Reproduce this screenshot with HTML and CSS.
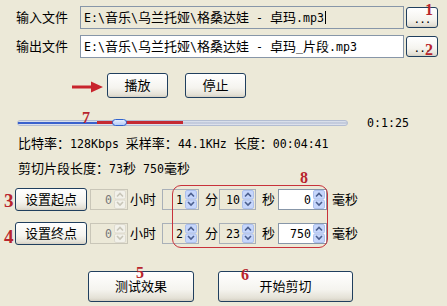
FILE: index.html
```html
<!DOCTYPE html>
<html lang="zh">
<head>
<meta charset="utf-8">
<title>MP3 剪切</title>
<link rel="stylesheet" href="styles.css">
</head>
<body>
<div class="app">
  <div class="file-row">
    <span class="file-label">输入文件</span>
    <div class="field ro"><span class="en">E:\</span>音乐<span class="en">\</span>乌兰托娅<span class="en">\</span>格桑达娃<span class="en"> - </span>卓玛<span class="en">.mp3</span><span class="caret"></span></div>
    <button class="btn browse">...</button>
  </div>
  <div class="file-row">
    <span class="file-label">输出文件</span>
    <div class="field"><span class="en">E:\</span>音乐<span class="en">\</span>乌兰托娅<span class="en">\</span>格桑达娃<span class="en"> - </span>卓玛<span class="en">_</span>片段<span class="en">.mp3</span></div>
    <button class="btn browse">...</button>
  </div>

  <div class="play-row">
    <svg class="arrow" width="32" height="12" viewBox="0 0 32 12"><path d="M0 4.5 H19 V0.5 L31 6 L19 11.5 V7.5 H0 Z" fill="#c8242c"/></svg>
    <button class="btn play">播放</button>
    <button class="btn play stop">停止</button>
  </div>

  <div class="slider-row">
    <div class="slider">
      <div class="track"></div>
      <div class="progress"></div>
      <div class="mark"></div>
      <div class="thumb"></div>
    </div>
    <span class="time en">0:1:25</span>
  </div>

  <div class="info">比特率：<span class="en">128Kbps </span>采样率：<span class="en">44.1KHz </span>长度：<span class="en">00:04:41</span></div>
  <div class="info second">剪切片段长度：<span class="en">73</span>秒<span class="en"> 750</span>毫秒</div>

  <div class="set-row">
    <button class="btn setbtn">设置起点</button>
    <div class="spin dis hr"><span class="val en">0</span><svg class="ud" viewBox="0 0 12 19"><rect x="0.5" y="0.5" width="11" height="8.5" rx="1.5"/><rect x="0.5" y="10" width="11" height="8.5" rx="1.5"/><path d="M3 6.5 6 3.5 9 6.5"/><path d="M3 12 6 15 9 12"/></svg></div>
    <span class="unit u-hr">小时</span>
    <div class="spin ro min"><span class="val en">1</span><svg class="ud" viewBox="0 0 12 19"><rect x="0.5" y="0.5" width="11" height="8.5" rx="1.5"/><rect x="0.5" y="10" width="11" height="8.5" rx="1.5"/><path d="M3 6.5 6 3.5 9 6.5"/><path d="M3 12 6 15 9 12"/></svg></div>
    <span class="unit u-min">分</span>
    <div class="spin ro sec"><span class="val en">10</span><svg class="ud" viewBox="0 0 12 19"><rect x="0.5" y="0.5" width="11" height="8.5" rx="1.5"/><rect x="0.5" y="10" width="11" height="8.5" rx="1.5"/><path d="M3 6.5 6 3.5 9 6.5"/><path d="M3 12 6 15 9 12"/></svg></div>
    <span class="unit u-sec">秒</span>
    <div class="spin ms"><span class="val en">0</span><svg class="ud" viewBox="0 0 12 19"><rect x="0.5" y="0.5" width="11" height="8.5" rx="1.5"/><rect x="0.5" y="10" width="11" height="8.5" rx="1.5"/><path d="M3 6.5 6 3.5 9 6.5"/><path d="M3 12 6 15 9 12"/></svg></div>
    <span class="unit u-ms">毫秒</span>
  </div>

  <div class="set-row">
    <button class="btn setbtn">设置终点</button>
    <div class="spin dis hr"><span class="val en">0</span><svg class="ud" viewBox="0 0 12 19"><rect x="0.5" y="0.5" width="11" height="8.5" rx="1.5"/><rect x="0.5" y="10" width="11" height="8.5" rx="1.5"/><path d="M3 6.5 6 3.5 9 6.5"/><path d="M3 12 6 15 9 12"/></svg></div>
    <span class="unit u-hr">小时</span>
    <div class="spin ro min"><span class="val en">2</span><svg class="ud" viewBox="0 0 12 19"><rect x="0.5" y="0.5" width="11" height="8.5" rx="1.5"/><rect x="0.5" y="10" width="11" height="8.5" rx="1.5"/><path d="M3 6.5 6 3.5 9 6.5"/><path d="M3 12 6 15 9 12"/></svg></div>
    <span class="unit u-min">分</span>
    <div class="spin ro sec"><span class="val en">23</span><svg class="ud" viewBox="0 0 12 19"><rect x="0.5" y="0.5" width="11" height="8.5" rx="1.5"/><rect x="0.5" y="10" width="11" height="8.5" rx="1.5"/><path d="M3 6.5 6 3.5 9 6.5"/><path d="M3 12 6 15 9 12"/></svg></div>
    <span class="unit u-sec">秒</span>
    <div class="spin ms"><span class="val en">750</span><svg class="ud" viewBox="0 0 12 19"><rect x="0.5" y="0.5" width="11" height="8.5" rx="1.5"/><rect x="0.5" y="10" width="11" height="8.5" rx="1.5"/><path d="M3 6.5 6 3.5 9 6.5"/><path d="M3 12 6 15 9 12"/></svg></div>
    <span class="unit u-ms">毫秒</span>
  </div>

  <div class="bottom">
    <button class="btn big test">测试效果</button>
    <button class="btn big cut">开始剪切</button>
  </div>
</div>

<div class="frame"></div>
<span class="ann a1">1</span>
<span class="ann a2">2</span>
<span class="ann a7">7</span>
<span class="ann a8">8</span>
<span class="ann big-n a3">3</span>
<span class="ann big-n a4">4</span>
<span class="ann a5">5</span>
<span class="ann a6">6</span>
</body>
</html>
```

FILE: styles.css
```css
html, body {
  margin: 0;
  padding: 0;
}
body {
  width: 447px;
  height: 306px;
  position: relative;
  overflow: hidden;
  background: #ece9d8;
  color: #000;
  font-family: "DejaVu Sans Mono", "Noto Sans CJK SC", monospace;
  font-size: 13px;
  line-height: 16px;
}
.en {
  font-family: "DejaVu Sans Mono", monospace;
  font-size: 11.6px;
}
.app {
  padding-top: 6px;
}

/* buttons */
.btn {
  box-sizing: border-box;
  margin: 0;
  padding: 0;
  border: 1px solid #203f5e;
  border-radius: 3px;
  background: linear-gradient(#ffffff, #f5f4ef 60%, #e4e1d6 90%, #d4cfc2);
  font-family: "DejaVu Sans Mono", "Noto Sans CJK SC", monospace;
  font-size: 13px;
  line-height: 16px;
  color: #000;
  display: flex;
  align-items: center;
  justify-content: center;
}

/* file rows */
.file-row {
  display: flex;
  align-items: center;
  height: 23px;
  padding-left: 16px;
}
.file-row + .file-row {
  margin-top: 6px;
}
.file-label {
  width: 64px;
}
.field {
  box-sizing: border-box;
  width: 324px;
  height: 23px;
  border: 1px solid #8796a8;
  background: #fff;
  padding-left: 3px;
  line-height: 21px;
  white-space: pre;
  overflow: hidden;
}
.field.ro {
  background: #ece9d8;
}
.caret {
  display: inline-block;
  vertical-align: -2px;
  width: 1px;
  height: 13px;
  background: #000;
  margin-left: 1px;
}
.browse {
  width: 32px;
  height: 21px;
  margin-left: 2px;
  font-family: "DejaVu Sans Mono", monospace;
  font-size: 11px;
  letter-spacing: -1px;
  padding-top: 5px;
}

/* play row */
.play-row {
  display: flex;
  align-items: center;
  height: 25px;
  margin-top: 15px;
  padding-left: 72px;
}
.arrow {
  display: block;
  margin-right: 3px;
  margin-top: 3px;
}
.play {
  width: 61px;
  height: 25px;
}
.stop {
  margin-left: 17px;
}

/* slider */
.slider-row {
  display: flex;
  align-items: center;
  height: 14px;
  margin-top: 18px;
  padding-left: 17px;
}
.slider {
  position: relative;
  width: 331px;
  height: 14px;
}
.track {
  box-sizing: border-box;
  margin-top: 4px;
  height: 6px;
  border: 1px solid #b3bdd2;
  border-radius: 3px;
  background: linear-gradient(#e4e8f1, #b9c2d6 50%, #e8ebf2);
}
.progress {
  position: absolute;
  left: 1px;
  top: 6px;
  width: 79px;
  height: 2px;
  background: #3a62cc;
}
.mark {
  position: absolute;
  left: 80px;
  top: 5px;
  width: 86px;
  height: 3px;
  background: #c52a33;
}
.thumb {
  position: absolute;
  left: 95px;
  top: 3px;
  width: 15px;
  height: 7px;
  box-sizing: border-box;
  border: 1px solid #3164cf;
  border-radius: 4px;
  background: linear-gradient(#e3ecfd, #b6cdf8);
}
.time {
  margin-left: 19px;
}

/* info */
.info {
  height: 16px;
  margin-top: 6px;
  padding-left: 18px;
  white-space: pre;
}
.info.second {
  margin-top: 9px;
}

/* set rows */
.set-row {
  display: flex;
  align-items: center;
  height: 23px;
  margin-top: 11px;
  padding-left: 15px;
}
.setbtn {
  width: 72px;
  height: 23px;
}
.spin {
  box-sizing: border-box;
  height: 21px;
  width: 37px;
  border: 1px solid #8796a8;
  background: #fff;
  display: flex;
  align-items: center;
  justify-content: flex-end;
  padding-right: 1px;
}
.spin .val {
  margin-right: 2px;
}
.ud {
  display: block;
  width: 12px;
  height: 19px;
}
.ud rect {
  fill: #c6d6fb;
  stroke: #adc0ec;
  stroke-width: 1;
}
.ud path {
  fill: none;
  stroke: #4b5f8e;
  stroke-width: 1.6;
}
.spin.ro {
  background: #ece9d8;
  border-color: #a9b0b8;
}
.spin.dis {
  background: #ece9d8;
  border-color: #c9c6b8;
  color: #777;
}
.spin.dis .ud rect {
  fill: #f2f1ea;
  stroke: #dedbd0;
}
.spin.dis .ud path {
  stroke: #c8c5b8;
}
.hr {
  width: 38px;
  margin-left: 3px;
}
.u-hr {
  margin-left: 2px;
}
.min {
  margin-left: 6px;
}
.u-min {
  margin-left: 6px;
}
.sec {
  margin-left: 1px;
}
.u-sec {
  margin-left: 6px;
}
.ms {
  width: 49px;
  margin-left: 3px;
}
.u-ms {
  margin-left: 5px;
}

/* bottom buttons */
.bottom {
  display: flex;
  margin-top: 26px;
  padding-left: 88px;
}
.big {
  height: 31px;
}
.test {
  width: 106px;
}
.cut {
  width: 135px;
  margin-left: 24px;
}

/* red annotations (overlay) */
.frame {
  position: absolute;
  left: 172px;
  top: 185px;
  width: 156px;
  height: 63px;
  box-sizing: border-box;
  border: 1.5px solid #c8323b;
  border-radius: 9px;
}
.ann {
  position: absolute;
  color: #b8252d;
  font-family: "Liberation Serif", serif;
  font-weight: bold;
  font-size: 16px;
  line-height: 1;
}
.big-n {
  font-size: 19px;
}
.a1 { left: 425px; top: 2px; }
.a2 { left: 425px; top: 42px; }
.a7 { left: 82px; top: 110px; }
.a8 { left: 300px; top: 170px; }
.a3 { left: 4px; top: 191px; }
.a4 { left: 4px; top: 227px; }
.a5 { left: 136px; top: 265px; }
.a6 { left: 241px; top: 267px; }
```
